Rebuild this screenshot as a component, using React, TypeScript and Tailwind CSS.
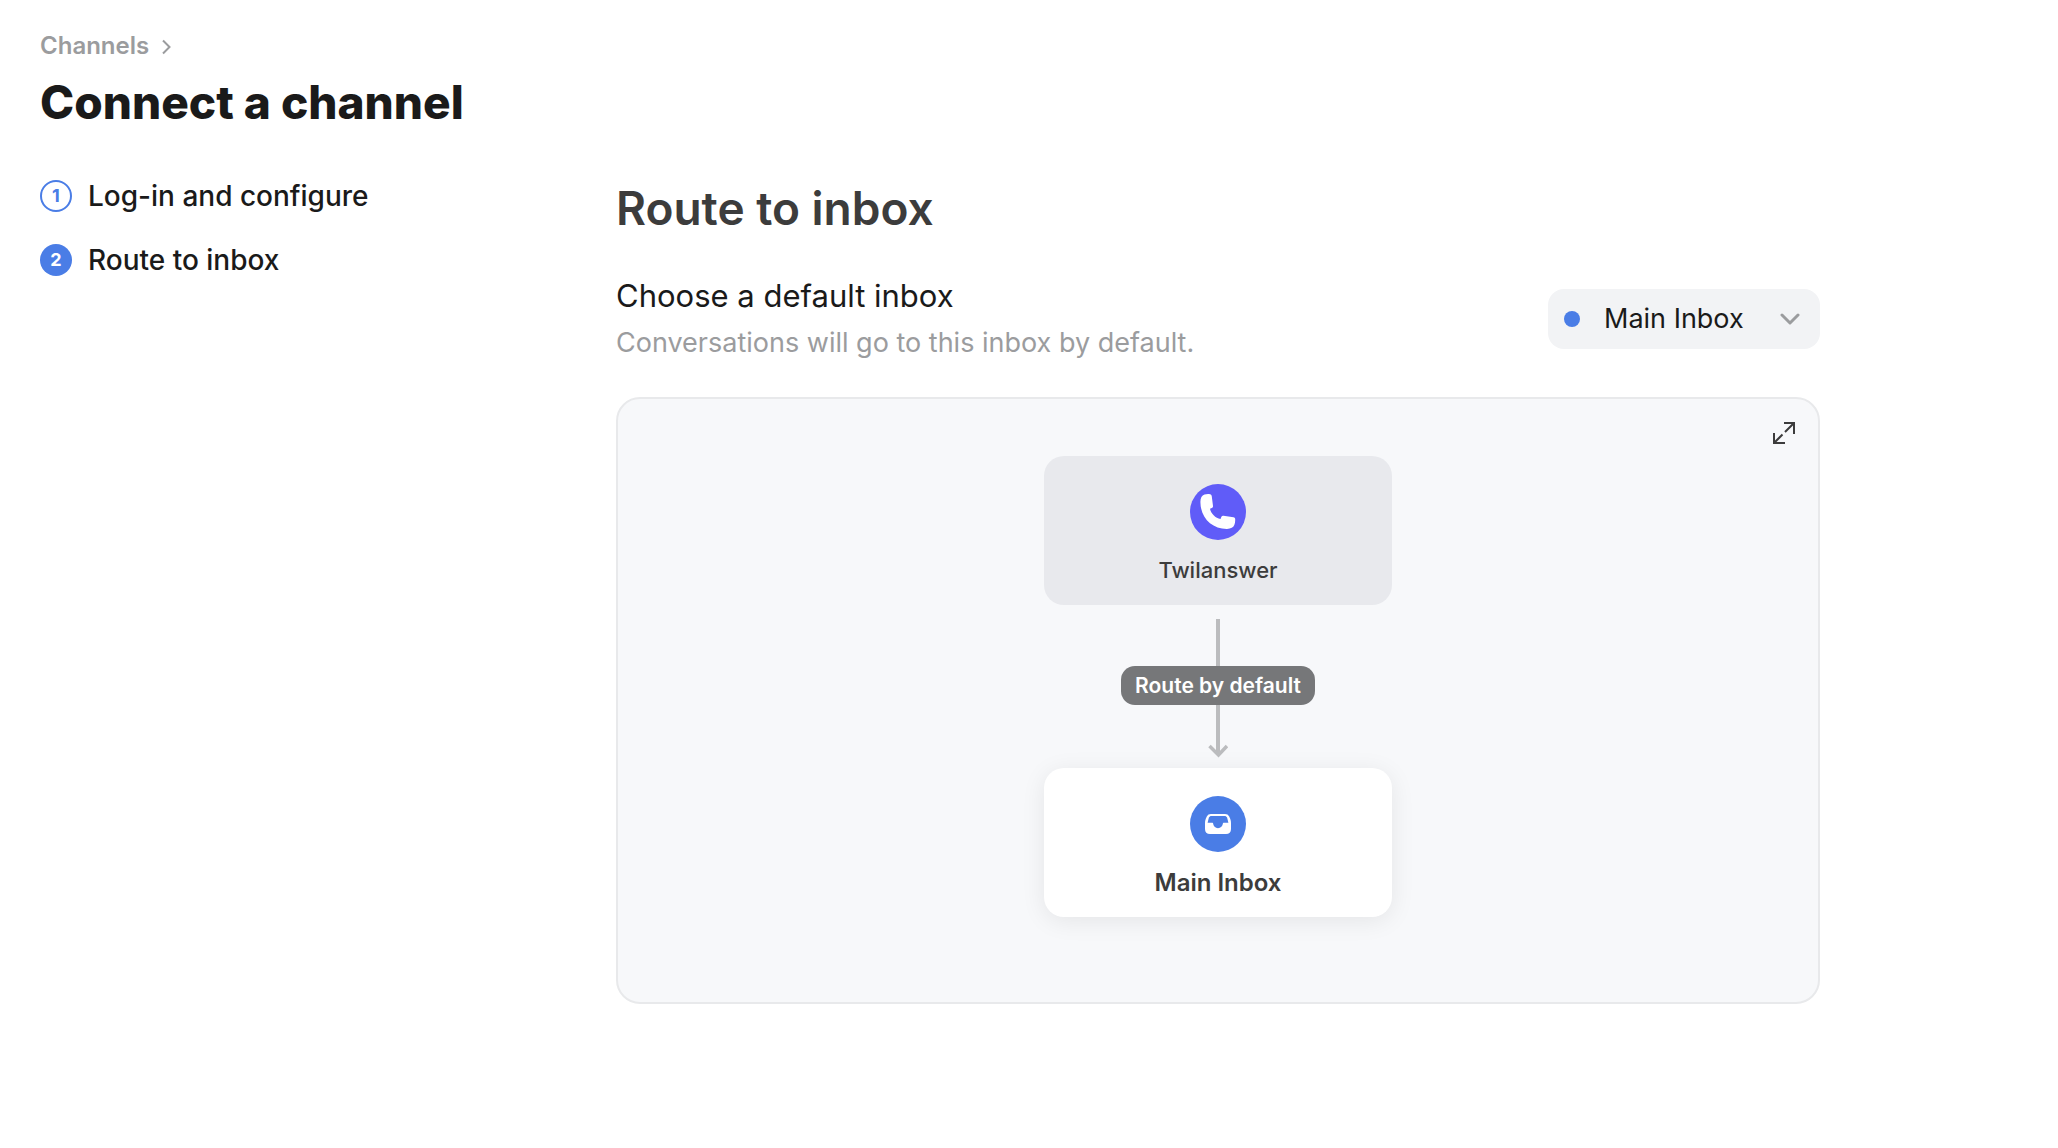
import { useState } from "react";

const steps = [
  { number: 1, label: "Log-in and configure", current: false },
  { number: 2, label: "Route to inbox", current: true },
];

function Breadcrumb() {
  return (
    <nav aria-label="Breadcrumb" className="flex h-8 items-center gap-3">
      <a href="#channels" className="text-2xl font-semibold text-[#9b9c9e]">
        Channels
      </a>
      <svg viewBox="0 0 10 16" className="mt-0.5 h-4 w-[10px]" fill="none" stroke="#9b9c9e" strokeWidth="2" aria-hidden="true">
        <path d="M2 1.500 8.500 8l-6.500 6.500" />
      </svg>
    </nav>
  );
}

function StepList() {
  return (
    <ol className="flex flex-col gap-8">
      {steps.map((step) => (
        <li key={step.number} aria-current={step.current ? "step" : undefined} className="flex h-8 items-center gap-4">
          <span
            className={
              step.current
                ? "flex size-8 items-center justify-center rounded-full bg-[#4a7de6] text-lg font-bold text-white"
                : "flex size-8 items-center justify-center rounded-full border-2 border-[#4a7de6] text-lg font-bold text-[#4a7de6]"
            }
          >
            {step.number}
          </span>
          <span className="text-[28px] leading-8 font-medium text-[#1a1a1a]">{step.label}</span>
        </li>
      ))}
    </ol>
  );
}

function InboxSelect() {
  const [inbox, setInbox] = useState("main");
  return (
    <div className="relative w-[272px] shrink-0">
      <select
        id="default-inbox"
        value={inbox}
        onChange={(event) => setInbox(event.target.value)}
        className="h-[60px] w-full appearance-none rounded-2xl bg-[#f2f3f5] pr-14 pl-14 text-[27px] text-[#1a1a1a]"
      >
        <option value="main">Main Inbox</option>
      </select>
      <span className="pointer-events-none absolute inset-y-0 left-4 flex items-center">
        <span className="size-4 rounded-full bg-[#4a7de6]" />
      </span>
      <span className="pointer-events-none absolute inset-y-0 right-5 flex items-center">
        <svg viewBox="0 0 20 12" className="h-3 w-5" fill="none" stroke="#9b9c9e" strokeWidth="3" strokeLinecap="round" strokeLinejoin="round" aria-hidden="true">
          <path d="M2 2l8 8 8-8" />
        </svg>
      </span>
    </div>
  );
}

function PhoneIcon() {
  return (
    <svg viewBox="0 0 56 56" className="size-14" aria-hidden="true">
      <circle cx="28" cy="28" r="28" fill="#605cf8" />
      <path
        fill="#fff"
        d="M14.500 10.500C16 10 18.500 9.800 20 10.200C21.200 10.500 21.700 11.300 21.800 12.400L23 22C23.100 23 22.700 23.600 21.800 24L20 24.800C20.800 29.500 25.500 34.300 30.500 35L31.300 33C31.700 32.100 32.400 31.700 33.400 31.800L43.500 33.200C44.700 33.400 45.200 34 45.200 35.200C45.300 37.500 45 39.500 44.300 41C43.200 43.500 41 44.800 37 44.900C22 45 10.500 34 10.400 18C10.400 13.800 11.800 11.400 14.500 10.500Z"
      />
    </svg>
  );
}

function InboxIcon() {
  return (
    <svg viewBox="0 0 56 56" className="size-14" aria-hidden="true">
      <circle cx="28" cy="28" r="28" fill="#4a7de6" />
      <path
        fill="#fff"
        fillRule="evenodd"
        d="M21 18H35C37 18 38.300 18.800 39.200 20.500L40.300 23C40.800 24.300 41 25.500 41 27V33C41 36.200 39.200 38 36 38H20C16.800 38 15 36.200 15 33V27C15 25.500 15.200 24.300 15.700 23L16.800 20.500C17.700 18.800 19 18 21 18ZM21.500 20C20.200 20 19.400 20.500 18.900 21.600L17.600 26.700H22.500C22.900 26.700 23.100 27 23.100 27.500C23.300 30.200 25.300 32.200 28 32.200C30.700 32.200 32.700 30.200 32.900 27.500C32.900 27 33.100 26.700 33.500 26.700H38.400L37.100 21.600C36.600 20.500 35.800 20 34.500 20Z"
      />
    </svg>
  );
}

function RouteArrow() {
  return (
    <div className="relative mt-[14px] mb-[10px] flex h-[139px] items-start justify-center pt-[47px]">
      <svg viewBox="0 0 20 139" className="absolute top-0 h-[139px] w-5" fill="none" stroke="#bbbcbe" aria-hidden="true">
        <path d="M10 0v135" strokeWidth="4" />
        <path d="M1.500 127l9 9 8.500-9" strokeWidth="3.500" />
      </svg>
      <span className="relative flex h-[39px] items-center rounded-[14px] bg-[#767779] px-[14px] text-[21px] font-semibold text-white">
        Route by default
      </span>
    </div>
  );
}

function RoutePreview() {
  return (
    <section
      aria-label="Routing preview"
      className="relative mt-[31px] flex flex-col items-center rounded-3xl border-2 border-[#e8e9eb] bg-[#f7f8fa] pt-[57px] pb-[85px]"
    >
      <button type="button" aria-label="Expand preview" className="absolute top-5 right-5 p-0.5">
        <svg viewBox="0 0 24 24" className="size-6" fill="none" stroke="#3c3c3c" strokeWidth="2" aria-hidden="true">
          <path d="M12 2h10v11M22 2l-9 9M2 12v10h11M2 22l8.500-8.500" />
        </svg>
      </button>
      <div className="flex w-[348px] flex-col items-center rounded-[20px] bg-[#e8e9ed] pt-7 pb-5">
        <PhoneIcon />
        <p className="mt-4 text-[22px] leading-[29px] font-medium text-[#3c3c3c]">Twilanswer</p>
      </div>
      <RouteArrow />
      <div className="flex w-[348px] flex-col items-center rounded-[20px] bg-white pt-7 pb-5 shadow-[0_4px_24px_rgba(0,0,0,0.08)]">
        <InboxIcon />
        <p className="mt-4 text-2xl leading-[29px] font-semibold text-[#3c3c3c]">Main Inbox</p>
      </div>
    </section>
  );
}

export default function App() {
  return (
    <div className="min-h-screen bg-white px-10 pt-[30px] pb-10 font-['Inter',sans-serif]">
      <header>
        <Breadcrumb />
        <h1 className="mt-3 text-[46px] leading-[56px] font-extrabold text-[#1a1a1a]">Connect a channel</h1>
      </header>
      <div className="mt-[50px] flex">
        <aside className="w-[576px] shrink-0">
          <StepList />
        </aside>
        <main className="w-full max-w-[1204px]">
          <h2 className="text-[46px] leading-[56px] font-semibold text-[#3c3c3c]">Route to inbox</h2>
          <div className="mt-9 flex items-center justify-between">
            <div>
              <label htmlFor="default-inbox" className="block text-[31px] leading-[47px] text-[#1a1a1a]">
                Choose a default inbox
              </label>
              <p className="text-[27px] leading-[47px] text-[#9b9c9e]">Conversations will go to this inbox by default.</p>
            </div>
            <InboxSelect />
          </div>
          <RoutePreview />
        </main>
      </div>
    </div>
  );
}
